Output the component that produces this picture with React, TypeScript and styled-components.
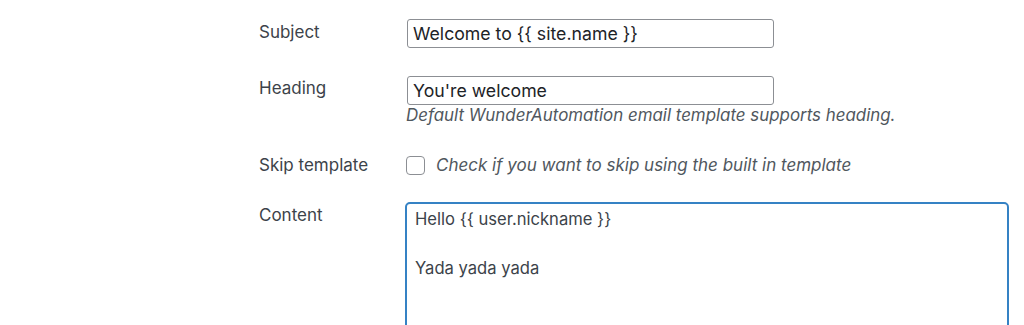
import React from "react";
import styled, { createGlobalStyle } from "styled-components";

const Global = createGlobalStyle`
  html, body { margin: 0; padding: 0; background: #ffffff; }
  body { font-family: Inter, "Liberation Sans", Arial, sans-serif; overflow: hidden; }
`;

const Page = styled.div`
  width: 1024px;
  height: 325px;
  overflow: hidden;
  box-sizing: border-box;
  padding: 19px 0 0 259px;
`;

const Row = styled.div<{ $gap: number }>`
  display: grid;
  grid-template-columns: 146px 603px;
  align-items: start;
  margin-bottom: ${(p) => p.$gap}px;
`;

const Label = styled.div<{ $lh: number; $pt?: number }>`
  font-size: 17px;
  line-height: ${(p) => p.$lh}px;
  padding-top: ${(p) => p.$pt ?? 0}px;
  color: #3c434a;
`;

const Field = styled.div`
  display: flex;
  flex-direction: column;
`;

const TextInput = styled.input`
  box-sizing: border-box;
  width: 367px;
  height: 29px;
  margin: 0 0 0 2px;
  padding: 0 5px;
  border: 1px solid #8c8f94;
  border-radius: 3px;
  font-family: inherit;
  font-size: 17.7px;
  color: #1d2327;
  background: #fff;
  outline: none;
`;

const Help = styled.p`
  margin: -1px 0 0 1px;
  font-size: 16.9px;
  line-height: 22px;
  font-style: italic;
  color: #50575e;
`;

const CheckRow = styled.label`
  display: flex;
  align-items: center;
  gap: 11px;
  margin-left: 1px;
`;

const Box = styled.span`
  box-sizing: border-box;
  width: 19px;
  height: 19px;
  border: 1px solid #8c8f94;
  border-radius: 4px;
  background: #fff;
`;

const CheckText = styled.span`
  font-size: 17px;
  line-height: 24px;
  font-style: italic;
  color: #50575e;
`;

const Area = styled.div`
  box-sizing: border-box;
  width: 604px;
  height: 160px;
  border: 2px solid #3582c4;
  border-radius: 5px;
  padding: 3px 8px;
  font-size: 16.6px;
  line-height: 24.5px;
  color: #3c434a;
  white-space: pre-wrap;
`;

export default function App() {
  return (
    <>
      <Global />
      <Page>
        <Row $gap={28}>
          <Label $lh={26}>Subject</Label>
          <Field>
            <TextInput defaultValue="Welcome to {{ site.name }}" />
          </Field>
        </Row>
        <Row $gap={27}>
          <Label $lh={25}>Heading</Label>
          <Field>
            <TextInput defaultValue="You're welcome" />
            <Help>Default WunderAutomation email template supports heading.</Help>
          </Field>
        </Row>
        <Row $gap={25}>
          <Label $lh={24}>Skip template</Label>
          <Field>
            <CheckRow>
              <Box />
              <CheckText>Check if you want to skip using the built in template</CheckText>
            </CheckRow>
          </Field>
        </Row>
        <Row $gap={0}>
          <Label $lh={24} $pt={1}>Content</Label>
          <Field>
            <Area>{"Hello {{ user.nickname }}\n\nYada yada yada"}</Area>
          </Field>
        </Row>
      </Page>
    </>
  );
}
